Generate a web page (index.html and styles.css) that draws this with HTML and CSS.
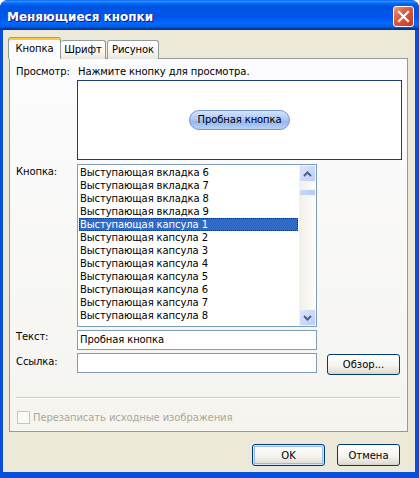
FILE: index.html
```html
<!DOCTYPE html>
<html lang="ru">
<head>
    <meta charset="UTF-8">
    <title>Меняющиеся кнопки</title>
    <link rel="stylesheet" href="styles.css">
</head>
<body>

    <div class="window">
        <div class="titlebar">
            <span class="title">Меняющиеся кнопки</span>
            <button class="close" aria-label="Закрыть">
                <svg width="13" height="13" viewBox="0 0 13 13">
                    <path d="M2 2 L11 11 M11 2 L2 11" stroke="#fff" stroke-width="2.2" stroke-linecap="square"/>
                </svg>
            </button>
        </div>

        <div class="client">
            <div class="tabs">
                <div class="tab active">Кнопка</div>
                <div class="tab">Шрифт</div>
                <div class="tab">Рисунок</div>
            </div>

            <div class="page">
                <div class="form">
                    <span class="label">Просмотр:</span>
                    <div class="preview-col">
                        <div class="hint">Нажмите кнопку для просмотра.</div>
                        <div class="preview">
                            <span class="pill">Пробная кнопка</span>
                        </div>
                    </div>

                    <span class="label list-label">Кнопка:</span>
                    <div class="listbox">
                        <ul class="items">
                            <li>Выступающая вкладка 6</li>
                            <li>Выступающая вкладка 7</li>
                            <li>Выступающая вкладка 8</li>
                            <li>Выступающая вкладка 9</li>
                            <li class="selected">Выступающая капсула 1</li>
                            <li>Выступающая капсула 2</li>
                            <li>Выступающая капсула 3</li>
                            <li>Выступающая капсула 4</li>
                            <li>Выступающая капсула 5</li>
                            <li>Выступающая капсула 6</li>
                            <li>Выступающая капсула 7</li>
                            <li>Выступающая капсула 8</li>
                        </ul>
                        <div class="scrollbar">
                            <div class="sb-btn">
                                <svg width="9" height="6" viewBox="0 0 9 6">
                                    <path d="M1 5 L4.5 1.5 L8 5" fill="none" stroke="#4D6185" stroke-width="2"/>
                                </svg>
                            </div>
                            <div class="sb-thumb"></div>
                            <div class="sb-track"></div>
                            <div class="sb-btn">
                                <svg width="9" height="6" viewBox="0 0 9 6">
                                    <path d="M1 1 L4.5 4.5 L8 1" fill="none" stroke="#4D6185" stroke-width="2"/>
                                </svg>
                            </div>
                        </div>
                    </div>

                    <span class="label row-label">Текст:</span>
                    <div class="input row-input">Пробная кнопка</div>

                    <span class="label row-label link-label">Ссылка:</span>
                    <div class="input row-input"></div>
                    <button class="btn browse">Обзор...</button>
                </div>

                <div class="sep"></div>

                <label class="check">
                    <span class="box"></span>
                    <span>Перезаписать исходные изображения</span>
                </label>
            </div>

            <div class="actions">
                <button class="btn default ok">OK</button>
                <button class="btn cancel">Отмена</button>
            </div>
        </div>
    </div>

</body>
</html>
```

FILE: styles.css
```css
* {
    box-sizing: border-box;
}

body {
    margin: 0;
    font-family: "DejaVu Sans", sans-serif;
    font-size: 10px;
    letter-spacing: -0.1px;
    color: #000;
    background: #fff;
}

.window {
    width: 419px;
    height: 478px;
    display: flex;
    flex-direction: column;
    background: #0A4FDC;
    border-radius: 8px 8px 0 0;
    overflow: hidden;
}

.titlebar {
    height: 30px;
    display: flex;
    align-items: center;
    justify-content: space-between;
    padding: 0 5px 0 7px;
    background: linear-gradient(to bottom, #0058EE 0%, #3593FF 4%, #288EFF 6%, #127DFF 8%, #036FFC 10%, #0262EE 14%, #0057E5 20%, #0054E3 24%, #0055EB 56%, #005BF5 66%, #026AFE 76%, #0062EF 86%, #0052D6 92%, #0040AB 94%, #003092 100%);
}

.title {
    color: #fff;
    font-weight: bold;
    font-size: 12px;
    letter-spacing: 0;
    margin-top: 3px;
    text-shadow: 1px 1px #0A1883;
}

.close {
    width: 21px;
    height: 21px;
    margin-top: 2px;
    padding: 0;
    display: flex;
    align-items: center;
    justify-content: center;
    border: 1px solid #fff;
    border-radius: 3px;
    background: linear-gradient(135deg, #EC9A82 0%, #DE5B3F 40%, #C8391A 100%);
}

.client {
    flex: 1;
    margin: 0 4px 6px 3px;
    background: #ECE9D8;
    padding: 7px 7px 0 6px;
    display: flex;
    flex-direction: column;
}

/* tabs */
.tabs {
    display: flex;
    align-items: flex-end;
    height: 22px;
    margin-bottom: -1px;
    position: relative;
    z-index: 1;
}

.tab {
    height: 19px;
    line-height: 17px;
    text-align: center;
    border: 1px solid #919B9C;
    border-bottom: none;
    border-radius: 3px 3px 0 0;
    background: linear-gradient(#FFFFFF, #F4F3EE 70%, #E6E4DA);
}

.tab:nth-child(2) {
    width: 45px;
    border-left: none;
}

.tab:nth-child(3) {
    width: 52px;
    margin-left: 1px;
}

.tab.active {
    width: 53px;
    height: 22px;
    margin-left: -1px;
    padding-top: 4px;
    line-height: 13px;
    border-top: 1px solid #E68B2C;
    background: #FCFCFE;
    box-shadow: inset 0 2px #FFC83C;
}

.page {
    height: 374px;
    border: 1px solid #919B9C;
    background: linear-gradient(#FCFCFE, #F5F4EF);
    padding: 6px 7px 0 6px;
}

/* form grid: label | control | gap | button */
.form {
    display: grid;
    grid-template-columns: 61px 240px 10px 73px;
    align-items: start;
}

.label {
    grid-column: 1;
    line-height: 13px;
}

.preview-col {
    grid-column: 2 / 5;
    margin-right: -2px;
}

.hint {
    line-height: 13px;
    padding-left: 1px;
}

.preview {
    margin-top: 2px;
    height: 80px;
    border: 1px solid #1D3C73;
    background: #fff;
    display: flex;
    align-items: center;
    justify-content: center;
}

.pill {
    width: 101px;
    height: 20px;
    line-height: 18px;
    text-align: center;
    border: 1px solid #7896D2;
    border-radius: 10px;
    background: linear-gradient(#D3E3FC, #A8C6F4 50%, #94B7EF 60%, #B9D2F8);
}

.list-label {
    margin-top: 5px;
}

.listbox {
    grid-column: 2;
    margin-top: 4px;
    height: 163px;
    border: 1px solid #7F9DB9;
    background: #fff;
    display: flex;
}

.items {
    flex: 1;
    min-width: 0;
    margin: 0;
    padding: 1px 0 0;
    list-style: none;
    overflow: hidden;
}

.items li {
    height: 13px;
    line-height: 13px;
    padding-left: 2px;
    white-space: nowrap;
}

.items li.selected {
    margin: 0 1px;
    padding-left: 1px;
    background: #316AC5;
    color: #fff;
    outline: 1px dotted #0F2F70;
    outline-offset: -1px;
}

.scrollbar {
    width: 17px;
    flex-shrink: 0;
    display: flex;
    flex-direction: column;
    background: linear-gradient(to right, #F1EFE8, #FEFEFB);
}

.sb-btn {
    height: 17px;
    display: flex;
    align-items: center;
    justify-content: center;
    border: 1px solid #EEF3FE;
    border-radius: 2px;
    background: linear-gradient(135deg, #DCE6FD, #BBCEF7);
}

.sb-thumb {
    margin-top: 7px;
    height: 7px;
    border: 1px solid #EEF3FE;
    border-radius: 2px;
    background: linear-gradient(to right, #C9D8FB, #B7CBF6);
}

.sb-track {
    flex: 1;
}

.row-label {
    margin-top: 3px;
}

.link-label {
    padding-top: 2px;
}

.input {
    grid-column: 2;
    height: 20px;
    line-height: 18px;
    padding-left: 2px;
    border: 1px solid #7F9DB9;
    background: #fff;
}

.row-input {
    margin-top: 3px;
}

.btn {
    height: 22px;
    padding: 0;
    font: inherit;
    color: #000;
    border: 1px solid #003C74;
    border-radius: 3px;
    background: linear-gradient(#FFFFFF, #F5F4F0 55%, #E3E0D6 90%, #D6D0C5);
}

.browse {
    grid-column: 4;
    margin-top: 4px;
    height: 21px;
}

.sep {
    margin-top: 22px;
    border-top: 1px solid #D0CFC0;
    border-bottom: 1px solid #fff;
}

.check {
    display: flex;
    align-items: center;
    gap: 3px;
    margin-top: 12px;
    margin-left: 1px;
    color: #ACA899;
    line-height: 13px;
}

.box {
    width: 13px;
    height: 13px;
    border: 1px solid #CAC8BB;
    background: #FAFAF7;
}

.actions {
    display: flex;
    justify-content: flex-end;
    gap: 12px;
    margin-top: 12px;
    padding-right: 8px;
}

.ok {
    width: 73px;
}

.cancel {
    width: 63px;
}

.btn.default {
    box-shadow: inset 0 0 0 1px #CEE7FF, inset 0 0 0 2px #98B8F4;
}
```
